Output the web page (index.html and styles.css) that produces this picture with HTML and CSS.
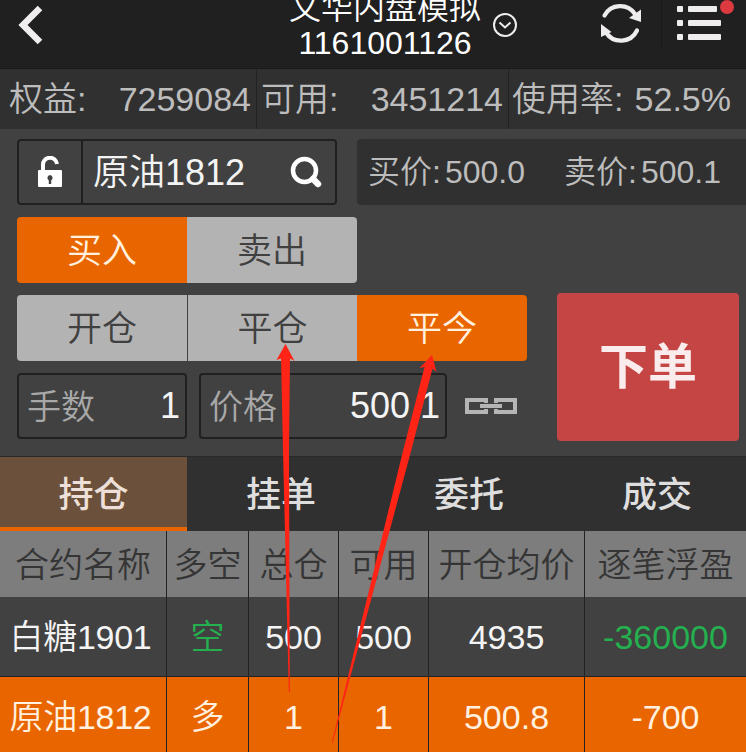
FILE: index.html
```html
<!DOCTYPE html>
<html lang="zh-CN">
<head>
<meta charset="utf-8">
<title>文华内盘模拟</title>
<link rel="stylesheet" href="styles.css">
</head>
<body>
<div class="app">
  <header class="topbar">
    <svg class="back" width="26" height="40" viewBox="0 0 26 40"><path d="M23 3 6 20 23 37" fill="none" stroke="#f0eeee" stroke-width="6.500"/></svg>
    <div class="account">
      <div class="account-text"><div>文华内盘模拟</div><div class="account-id">1161001126</div></div>
      <svg class="drop" width="26" height="26" viewBox="0 0 26 26" fill="none" stroke="#eee" stroke-width="2"><circle cx="13" cy="13" r="11"/><path d="m7.500 10.500 5.500 5 5.500-5"/></svg>
    </div>
    <svg class="refresh" width="42" height="42" viewBox="0 0 42 42"><g fill="none" stroke="#eeecec" stroke-width="4.200"><path d="M4.500 13.500A17.800 17.800 0 0 1 35 12" stroke-linecap="round"/><path d="M37 28.500A17.800 17.800 0 0 1 6 30.500" stroke-linecap="round"/></g><path d="M41 7.500V20L29 16ZM1 22 11.500 30 1 35Z" fill="#eeecec"/></svg>
    <div class="menu">
      <svg width="46" height="36" viewBox="0 0 46 36" fill="#eeecec"><rect y="1" width="6" height="6" rx="1"/><rect x="11" y="1" width="29" height="6" rx="1"/><rect y="15" width="6" height="6" rx="1"/><rect x="11" y="15" width="33" height="6" rx="1"/><rect y="29" width="6" height="6" rx="1"/><rect x="11" y="29" width="33" height="6" rx="1"/></svg>
      <span class="badge"></span>
    </div>
  </header>

  <section class="funds">
    <div class="fund"><span>权益:</span><span>7259084</span></div>
    <div class="fund"><span>可用:</span><span>3451214</span></div>
    <div class="fund rate"><span>使用率:</span><span>52.5%</span></div>
  </section>

  <section class="order">
    <div class="row quote-row">
      <div class="contract">
        <div class="lock"><svg width="26" height="32" viewBox="0 0 26 32"><path d="M6 15V9.500a7 7 0 0 1 14-1.500" fill="none" stroke="#fff" stroke-width="4"/><rect x="1" y="14" width="24" height="17" rx="1" fill="#fff"/><path d="M13 19a3 3 0 0 1 1.200 5.500V28h-2.400v-3.500A3 3 0 0 1 13 19Z" fill="#414141"/></svg></div>
        <span class="contract-name">原油1812</span>
        <svg class="search" width="32" height="32" viewBox="0 0 32 32" fill="none" stroke="#fff"><circle cx="14.500" cy="14.500" r="11.500" stroke-width="4.500"/><path d="m23 23 5 5" stroke-width="6.500" stroke-linecap="round"/></svg>
      </div>
      <div class="quotes"><span>买价:</span><span class="bid">500.0</span><span>卖价:</span><span class="ask">500.1</span></div>
    </div>
    <div class="row segment">
      <div class="seg active">买入</div><div class="seg">卖出</div>
    </div>
    <div class="lower">
      <div class="settings">
        <div class="segment">
          <div class="seg">开仓</div><div class="seg divided">平仓</div><div class="seg active">平今</div>
        </div>
        <div class="inputs">
          <div class="field lots"><span>手数</span><b>1</b></div>
          <div class="field price"><span>价格</span><b>500.1</b></div>
          <svg class="link" width="54" height="20" viewBox="0 0 54 20" fill="none" stroke="#b5b5b5" stroke-width="4"><path d="M22 7V4H3v12h19v-3M32 7V4h19v12H32v-3M16 10h22"/></svg>
        </div>
      </div>
      <div class="submit">下单</div>
    </div>
  </section>

  <nav class="tabs"><div class="tab current">持仓</div><div class="tab">挂单</div><div class="tab">委托</div><div class="tab">成交</div></nav>

  <div class="positions">
    <div class="line head"><div>合约名称</div><div>多空</div><div>总仓</div><div>可用</div><div>开仓均价</div><div>逐笔浮盈</div></div>
    <div class="line"><div class="name">白糖1901</div><div class="green">空</div><div>500</div><div>500</div><div>4935</div><div class="green">-360000</div></div>
    <div class="line selected"><div class="name">原油1812</div><div>多</div><div>1</div><div>1</div><div>500.8</div><div>-700</div></div>
  </div>

  <svg class="arrows" width="746" height="752" viewBox="0 0 746 752" fill="#ff2415"><path d="M285.500 344 294.500 361 290 358.500 289 450 289.800 692H288.800L283 450 281 358.500 276.500 360Z"/><path d="M432 355 436.500 372 432.500 368.500 410 455 332.500 743H331.800L402 455 424.500 367 419.500 368Z"/></svg>
</div>
</body>
</html>
```
FILE: styles.css
```css
* { box-sizing: border-box; }
body { margin: 0; }
.app {
  position: relative;
  width: 746px;
  height: 752px;
  overflow: hidden;
  background: #414141;
  color: #f4f4f4;
  font-family: "Liberation Sans", "Noto Sans CJK SC", sans-serif;
  font-weight: 350;
  font-size: 34px;
  white-space: nowrap;
}
svg { display: block; flex: none; }

.topbar { display: flex; height: 69px; background: #202020; border-bottom: 1px solid #1a1a1a; }
.back { margin: 5px 0 0 17px; }
.account { display: flex; margin-left: 246px; }
.account-text { width: 192px; margin-top: -9px; font-size: 32px; line-height: 34px; text-align: center; color: #fff; }
.account-id { margin-top: 1px; }
.drop { margin: 12px 0 0 11px; }
.refresh { margin: 2px 0 0 82px; }
.menu { position: relative; height: 49px; margin-left: 19px; padding: 5px 0 0 15px; border-left: 1px solid #1a1a1a; }
.badge { position: absolute; left: 58px; top: 0; width: 14px; height: 14px; border-radius: 50%; background: #dc3940; }

.funds { display: flex; height: 60px; background: #303030; color: #bdbdbd; line-height: 61px; }
.fund { display: flex; justify-content: space-between; width: 252px; padding: 0 5px 0 4px; border-right: 1px solid #222; }
.fund:first-child { width: 257px; padding-left: 9px; }
.rate { width: 237px; padding: 0 15px 0 3px; border: 0; }

.order { height: 327px; padding: 10px 0 0 17px; }
.row { height: 66px; margin-bottom: 12px; }
.quote-row { display: flex; gap: 20px; }
.contract { display: flex; align-items: center; width: 320px; border: 2px solid #202020; border-radius: 4px; font-size: 36px; }
.lock { display: flex; align-items: center; justify-content: center; width: 64px; height: 62px; border-right: 2px solid #202020; }
.contract-name { flex: 1; padding: 0 0 7px 10px; }
.search { margin-right: 13px; }
.quotes { display: flex; flex: 1; padding-left: 11px; background: #303030; border-radius: 4px 0 0 4px; color: #bdbdbd; font-size: 32px; line-height: 66px; }
.bid { margin: 0 39px 0 4px; }
.ask { margin-left: 4px; }

.segment { display: flex; height: 66px; }
.seg { width: 170px; background: #b3b3b3; color: #404040; font-size: 35px; line-height: 68px; text-align: center; }
.seg:first-child { border-radius: 4px 0 0 4px; }
.seg:last-child { border-radius: 0 4px 4px 0; }
.divided { border-left: 1px solid #404040; }
.active { background: #e96500; color: #fff0df; }
.lower { display: flex; margin-top: -2px; }
.settings { width: 540px; padding-top: 2px; }
.inputs { display: flex; height: 66px; margin-top: 12px; }
.field { display: flex; justify-content: space-between; border: 2px solid #202020; border-radius: 4px; padding: 0 5px 0 8px; line-height: 62px; }
.field span { color: #a8a8a8; line-height: 65px; }
.field b { font-size: 36px; font-weight: inherit; }
.lots { width: 170px; }
.price { width: 248px; margin-left: 12px; }
.link { margin: 23px 0 0 17px; }
.submit { width: 182px; height: 148px; border-radius: 4px; background: #c54545; color: #faecec; font-size: 49px; font-weight: 700; line-height: 149px; text-align: center; }

.tabs { display: flex; height: 75px; background: #303030; border-top: 1px solid #292929; }
.tab { flex: 0 0 188px; font-size: 35px; font-weight: 500; line-height: 75px; text-align: center; color: #dedede; }
.current { width: 187px; flex-basis: 187px; background: #6b503b; border-bottom: 4px solid #e96500; color: #eee0d8; }

.line { display: grid; grid-template-columns: 167px 82px 90px 90px 156px 161px; height: 79px; line-height: 81px; text-align: center; }
.line > div { border-right: 1px solid #222; }
.line > div:last-child { border-right: 0; }
.head { height: 66px; line-height: 68px; background: #7d7d7d; color: #353535; }
.selected { height: 76px; border-top: 1px solid #222; background: #e96500; color: #fff0df; line-height: 81px; }
.line .name { padding-right: 5px; letter-spacing: -.3px; }
.green { color: #24b04f; }
.arrows { position: absolute; left: 0; top: 0; }
```
